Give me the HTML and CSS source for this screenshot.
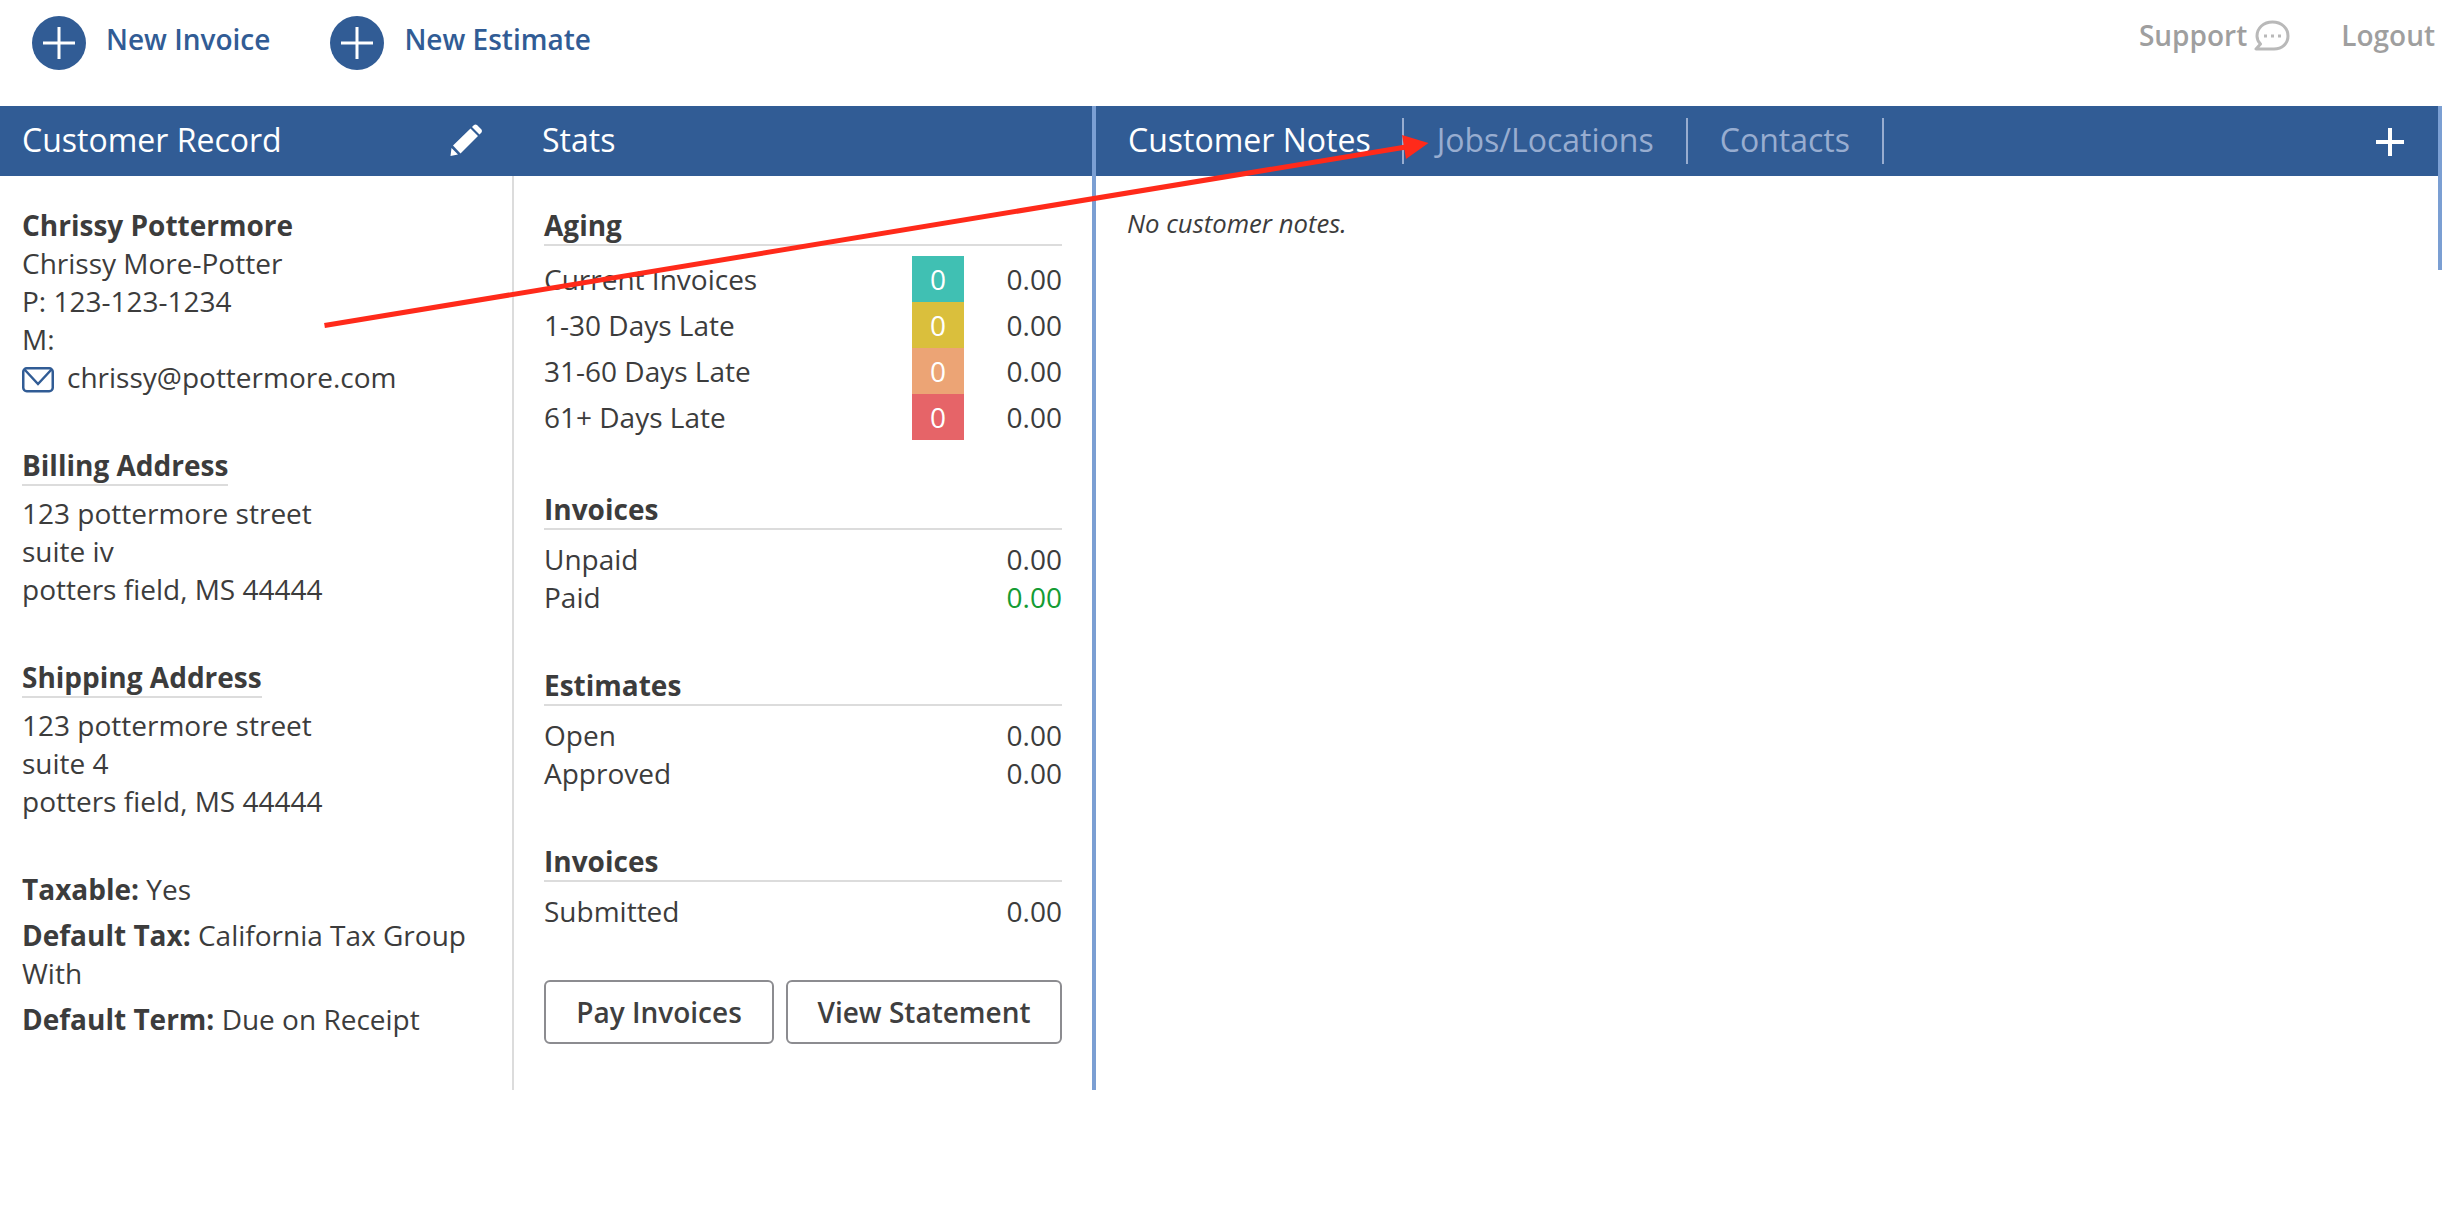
FILE: index.html
```html
<!DOCTYPE html>
<html lang="en">
<head>
  <meta charset="UTF-8" />
  <meta name="viewport" content="width=device-width, initial-scale=1.0"/>
  <title>Customer Record</title>
  <link rel="stylesheet" href="styles.css">
</head>
<body>
  <!-- Top bar -->
  <header class="topbar">
    <nav class="actions">
      <a class="action" href="#">
        <svg class="circle-plus" width="54" height="54" viewBox="0 0 54 54">
          <circle cx="27" cy="27" r="27" fill="#315c95"/>
          <path d="M11 27h32M27 11v32" stroke="#fff" stroke-width="3"/>
        </svg>
        New Invoice
      </a>
      <a class="action" href="#">
        <svg class="circle-plus" width="54" height="54" viewBox="0 0 54 54">
          <circle cx="27" cy="27" r="27" fill="#315c95"/>
          <path d="M11 27h32M27 11v32" stroke="#fff" stroke-width="3"/>
        </svg>
        New Estimate
      </a>
    </nav>
    <nav class="account">
      <a class="support" href="#">Support
        <svg width="36" height="32" viewBox="0 0 36 32" fill="none" stroke="#b9b9b9" stroke-width="3">
          <path d="M2 29H20C28 29 34 23.500 34 16C34 8 27.500 2 18.500 2C9.500 2 3 8 3 16C3 19 4 21.500 6.500 24Z" stroke-linejoin="round"/>
          <path d="M10 16h3M17 16h3M24 16h3"/>
        </svg>
      </a>
      <a href="#">Logout</a>
    </nav>
  </header>

  <main class="panels">
    <!-- Customer record -->
    <section class="panel record">
      <div class="panel-head">
        <h2>Customer Record</h2>
        <svg class="pencil" width="33" height="33" viewBox="0 0 33 33" fill="#fff">
          <path d="M0.500 32l1-8 6.500 6.500zM3 21.500L20.500 4.500l7.500 7.500L10.500 29.500zM22 3L24 1Q25.500 0 27 1L31.500 5.500Q32.500 7 31.500 8.500L29.500 10.500z"/>
        </svg>
      </div>
      <div class="panel-body">
        <div class="block">
          <strong>Chrissy Pottermore</strong><br>
          Chrissy More-Potter<br>
          P: 123-123-1234<br>
          M:
          <div class="email">
            <svg width="32" height="26" viewBox="0 0 32 26" fill="none" stroke="#315c95" stroke-width="2.500">
              <rect x="1.250" y="1.250" width="29.500" height="23" rx="3.500"/>
              <path d="M2.500 2.500L16 17L29.500 2.500"/>
            </svg>
            chrissy@pottermore.com
          </div>
        </div>
        <div class="block">
          <h3>Billing Address</h3>
          <p>123 pottermore street<br>suite iv<br>potters field, MS 44444</p>
        </div>
        <div class="block">
          <h3>Shipping Address</h3>
          <p>123 pottermore street<br>suite 4<br>potters field, MS 44444</p>
        </div>
        <div class="block terms">
          <p><strong>Taxable:</strong> Yes</p>
          <p><strong>Default Tax:</strong> California Tax Group With</p>
          <p><strong>Default Term:</strong> Due on Receipt</p>
        </div>
      </div>
    </section>

    <!-- Stats -->
    <section class="panel stats">
      <div class="panel-head">
        <h2>Stats</h2>
      </div>
      <div class="panel-body">
        <div class="group aging">
          <h3>Aging</h3>
          <div class="row"><span>Current Invoices</span><span class="count current">0</span><span class="amount">0.00</span></div>
          <div class="row"><span>1-30 Days Late</span><span class="count late-30">0</span><span class="amount">0.00</span></div>
          <div class="row"><span>31-60 Days Late</span><span class="count late-60">0</span><span class="amount">0.00</span></div>
          <div class="row"><span>61+ Days Late</span><span class="count late-61">0</span><span class="amount">0.00</span></div>
        </div>
        <div class="group">
          <h3>Invoices</h3>
          <div class="row"><span>Unpaid</span><span class="amount">0.00</span></div>
          <div class="row"><span>Paid</span><span class="amount paid">0.00</span></div>
        </div>
        <div class="group">
          <h3>Estimates</h3>
          <div class="row"><span>Open</span><span class="amount">0.00</span></div>
          <div class="row"><span>Approved</span><span class="amount">0.00</span></div>
        </div>
        <div class="group">
          <h3>Invoices</h3>
          <div class="row"><span>Submitted</span><span class="amount">0.00</span></div>
        </div>
        <div class="buttons">
          <button class="pay">Pay Invoices</button>
          <button class="statement">View Statement</button>
        </div>
      </div>
    </section>

    <!-- Notes -->
    <section class="panel notes">
      <div class="panel-head">
        <div class="tabs">
          <a class="tab active" href="#">Customer Notes</a>
          <a class="tab" href="#">Jobs/Locations</a>
          <a class="tab" href="#">Contacts</a>
        </div>
        <svg class="add" width="28" height="28" viewBox="0 0 28 28">
          <path d="M0 14h28M14 0v28" stroke="#fff" stroke-width="4"/>
        </svg>
      </div>
      <p class="empty">No customer notes.</p>
    </section>
  </main>

  <!-- Arrow from the record to the Jobs/Locations tab -->
  <svg class="arrow" width="1120" height="200" viewBox="0 0 1120 200">
    <path d="M14.500 185.500L1096 7" stroke="#ff2a1a" stroke-width="5"/>
    <path d="M1092 -5L1118.500 3L1096 19z" fill="#ff2a1a"/>
  </svg>
</body>
</html>
```

FILE: styles.css
```css
* {
  box-sizing: border-box;
  margin: 0;
  padding: 0;
}
body {
  font-family: "Open Sans", "Noto Sans", sans-serif;
  font-size: 28px;
  line-height: 38px;
  color: #3c3c3c;
  background: #fff;
}
a {
  text-decoration: none;
  color: inherit;
}
svg {
  display: block;
  flex: none;
}

/* top bar */
.topbar {
  display: flex;
  justify-content: space-between;
  height: 106px;
  padding: 16px 16px 0 32px;
  font-weight: 600;
}
.actions {
  display: flex;
  gap: 60px;
  color: #315c95;
}
.action {
  display: flex;
  gap: 20px;
  height: 54px;
  line-height: 46px;
}
.account {
  display: flex;
  gap: 51px;
  color: #9f9f9f;
}
.support {
  display: flex;
  gap: 7px;
}
.support svg {
  margin-top: 4px;
}

/* panels */
.panels {
  display: flex;
  align-items: flex-start;
  width: 2442px;
}
.panel-head {
  display: flex;
  align-items: center;
  justify-content: space-between;
  height: 70px;
  background: #315c95;
  color: #fff;
  font-size: 32px;
}
.panel-head h2 {
  padding-bottom: 2px;
  font-size: 32px;
  font-weight: 400;
}
.record {
  width: 514px;
}
.record .panel-head {
  padding: 0 31px 0 22px;
}
.pencil {
  margin-bottom: 2px;
}
.record .panel-body {
  height: 914px;
  padding: 30px 22px 0;
  border-right: 2px solid #dcdcdc;
}
.block {
  margin-bottom: 50px;
}
.block h3 {
  display: table;
  font-size: 28px;
  border-bottom: 2px solid #dcdcdc;
  margin-bottom: 8px;
}
.email {
  display: flex;
  align-items: center;
  gap: 13px;
}
.email svg {
  margin-top: 5px;
}
.terms p {
  margin-bottom: 8px;
}

/* stats */
.stats {
  width: 582px;
  border-right: 4px solid #7b9fd3;
}
.stats .panel-head {
  padding-left: 28px;
}
.stats .panel-body {
  height: 914px;
  padding: 30px 30px 0;
}
.group {
  margin-bottom: 50px;
}
.group h3 {
  font-size: 28px;
  border-bottom: 2px solid #dcdcdc;
  margin-bottom: 10px;
}
.row {
  display: flex;
  justify-content: space-between;
}
.aging .row {
  display: grid;
  grid-template-columns: 1fr 52px 98px;
  line-height: 46px;
}
.amount {
  text-align: right;
}
.paid {
  color: #149c34;
}
.count {
  color: #fff;
  text-align: center;
}
.current { background: #40c0b3; }
.late-30 { background: #dabf3c; }
.late-60 { background: #eca475; }
.late-61 { background: #e66468; }
.buttons {
  display: flex;
  gap: 12px;
}
.buttons button {
  height: 64px;
  border: 2px solid #8c8c90;
  border-radius: 6px;
  background: #fff;
  color: #3f3f3f;
  font: 600 28px "Open Sans", sans-serif;
  white-space: nowrap;
}
.pay { width: 230px; }
.statement { width: 276px; }

/* notes */
.notes {
  flex: 1;
  height: 164px;
  border-right: 4px solid #7b9fd3;
}
.notes .panel-head {
  padding-right: 34px;
}
.tabs {
  display: flex;
}
.tab {
  height: 46px;
  padding: 0 32px;
  line-height: 44px;
  color: #98add0;
  border-right: 2px solid #98add0;
}
.tab.active {
  padding-right: 31px;
  margin-right: 1px;
  color: #fff;
}
.add {
  margin-top: 2px;
}
.empty {
  padding: 29px 31px;
  font-size: 25.7px;
  font-style: italic;
}

.arrow {
  position: absolute;
  left: 310px;
  top: 140px;
  overflow: visible;
}
```
